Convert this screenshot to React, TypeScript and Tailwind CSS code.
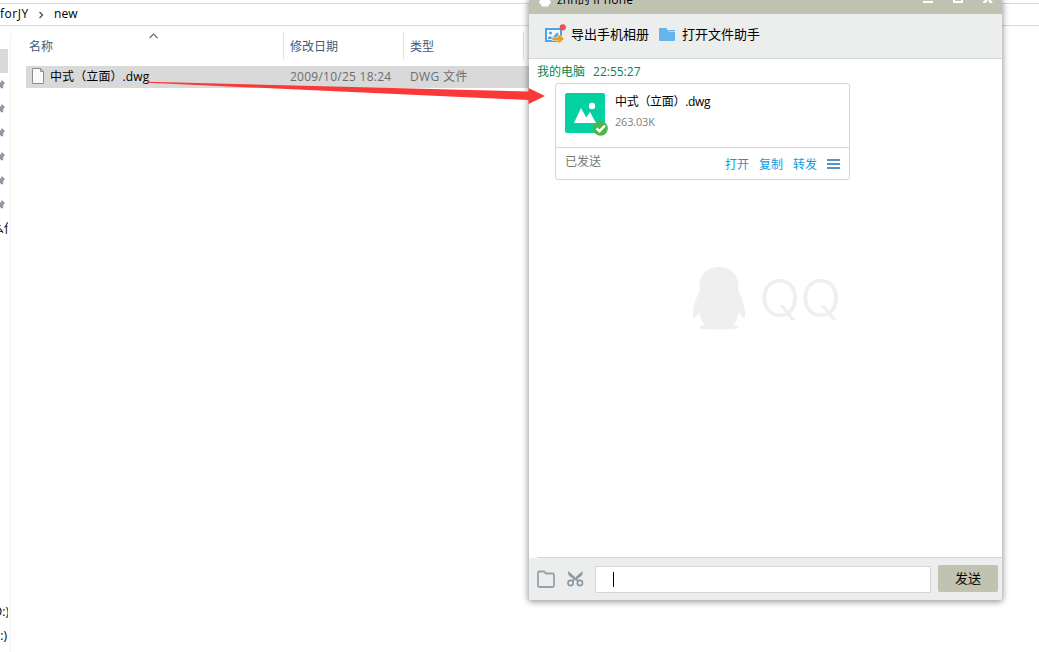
import React from 'react';

const pinRows = [0, 1, 2, 3, 4, 5];

function Pin() {
  return (
    <svg width="6" height="12" viewBox="0 0 6 12" className="block" fill="#8b98a3">
      <path d="M0 3.5 L1.2 3.2 L1.6 .8 L5.3 4.6 L3.4 5.2 L3.2 8.6 L2 9.8 L0 8Z" />
    </svg>
  );
}

function Sidebar() {
  return (
    <aside className="h-full w-[11px] shrink-0 overflow-hidden pt-[7px]">
      <div className="flex h-[619px] w-[11px] flex-col border-r border-[#f5f5f5] pt-4">
        <div className="h-6 w-2 shrink-0 bg-[#d9d9d9]" />
        {pinRows.map((row) => (
          <div key={row} className="flex h-6 shrink-0 items-center">
            <Pin />
          </div>
        ))}
        <div className="h-6 w-2 shrink-0 overflow-hidden whitespace-nowrap leading-[24px]">
          <span className="-ml-[8px] block">么传</span>
        </div>
        <div className="h-[359px] shrink-0" />
        <div className="flex h-6 w-2 shrink-0 justify-end overflow-hidden whitespace-nowrap leading-6">
          <span className="-mr-[1px]">(D:)</span>
        </div>
        <div className="flex h-6 w-[7px] shrink-0 justify-end overflow-hidden whitespace-nowrap leading-6">(E:)</div>
      </div>
    </aside>
  );
}

function Explorer() {
  return (
    <div className="flex h-full w-full flex-col">
      <div className="h-1 shrink-0 border-b border-[#d9d9d9]" />
      <div className="flex h-[22px] shrink-0 items-center border-b border-[#d9d9d9] leading-[20px]">
        <span className="-mt-[1px] w-[37px] tracking-[.5px]">forJY</span>
        <svg width="8" height="8" viewBox="0 0 8 8" className="mr-[9px]" fill="none" stroke="#555" strokeWidth="1.4">
          <path d="M2.5 1 L5.5 4 L2.5 7" />
        </svg>
        <span className="-mt-[2px] tracking-[.1px]">new</span>
      </div>
      <div className="flex min-h-0 grow">
        <Sidebar />
        <main className="flex w-[1013px] flex-col pl-[15px] pt-[6px]">
          <div className="flex h-[28px] text-[#44597a]">
            <div className="flex w-[258px] border-r border-[#e2e2e2] pl-[3px] leading-[29px]">
              <span className="w-[120px]">名称</span>
              <svg width="9" height="6" viewBox="0 0 9 6" className="mt-[1px]" fill="none" stroke="#666" strokeWidth="1.1">
                <path d="M.5 5 L4.5 1 L8.5 5" />
              </svg>
            </div>
            <div className="w-[120px] border-r border-[#e2e2e2] pl-[6px] leading-[29px]">修改日期</div>
            <div className="w-[120px] border-r border-[#e2e2e2] pl-[6px] leading-[29px]">类型</div>
          </div>
          <div className="mt-[6px] flex h-[22px] w-[503px] items-center bg-[#d9d9d9] pl-[6px] leading-[22px] text-[#6d6d6d]">
            <svg width="12" height="16" viewBox="0 0 12 16" className="mr-[6px] -mt-[2px]">
              <path d="M.5 .5 H8.5 L11.5 3.5 V15.5 H.5Z" fill="#fafafa" stroke="#8c8c8c" />
              <path d="M8.5 .5 V3.5 H11.5" fill="none" stroke="#8c8c8c" />
            </svg>
            <span className="w-[240px] text-black tracking-[.1px]">中式（立面）.dwg</span>
            <span className="w-[120px] tracking-[.25px]">2009/10/25 18:24</span>
            <span className="tracking-[.35px]">DWG 文件</span>
          </div>
        </main>
      </div>
    </div>
  );
}

function PhotoExportIcon() {
  return (
    <svg width="22" height="22" viewBox="0 0 22 22" className="-mt-[2px]">
      <rect x="2" y="5" width="15" height="12" fill="#f4f9fc" stroke="#4aa5e8" strokeWidth="2" />
      <circle cx="6.5" cy="9" r="1.5" fill="#4aa5e8" />
      <path d="M4 15 V13.5 L6 12 L8.5 13.5 L13 8.5 L15 10 V15Z" fill="#4aa5e8" />
      <path d="M8 13.2 H14 V10 L20.5 14.8 L14 19.7 V16.5 H8Z" fill="#f39c12" stroke="#eceeed" strokeWidth=".6" />
      <circle cx="18.8" cy="3.3" r="3.1" fill="#e85454" />
    </svg>
  );
}

function FileCard() {
  return (
    <section className="ml-[26px] mt-[2px] flex h-[97px] w-[295px] flex-col rounded-[3px] border border-[#ccd7e0] bg-white">
      <div className="flex h-[64px] shrink-0 border-b border-[#ccd7e0] pl-[9px] pt-[9px]">
        <svg width="44" height="44" viewBox="0 0 44 44" className="mr-[6px]">
          <rect width="40" height="40" rx="2" fill="#03d1a2" />
          <circle cx="27" cy="13" r="3.2" fill="#fff" />
          <path d="M9 30 L16 15 L21.3 24.5 L25 19 L31 30Z" fill="#fff" />
          <circle cx="35.5" cy="35.5" r="7.3" fill="#4fb54b" />
          <path d="M31.5 35.3 L34.5 38.2 L40 32.5" fill="none" stroke="#fff" strokeWidth="2.4" />
        </svg>
        <div className="flex flex-col">
          <span className="h-[20px] leading-[18px] tracking-[-.3px]">中式（立面）.dwg</span>
          <span className="text-[11px] leading-[18px] tracking-[-.2px] text-[#808080]">263.03K</span>
        </div>
      </div>
      <div className="flex pl-[9px] leading-[28px]">
        <span className="w-[160px] text-[#777]">已发送</span>
        <div className="flex gap-[10px] pt-[3px] text-[#0f9bd9]">
          <span>打开</span>
          <span>复制</span>
          <span>转发</span>
          <div className="mt-[8px] flex flex-col gap-[2px]">
            <div className="h-[2px] w-[13px] bg-[#5295c9]" />
            <div className="h-[2px] w-[13px] bg-[#5295c9]" />
            <div className="h-[2px] w-[13px] bg-[#5295c9]" />
          </div>
        </div>
      </div>
    </section>
  );
}

function Watermark() {
  return (
    <div className="mt-[86px] flex h-[64px] pl-[163px] text-[#efefef]">
      <svg width="54" height="64" viewBox="0 0 54 64" fill="currentColor">
        <path d="M27 1 C15 1 7.5 9 7.5 20 V26 C4 32 .5 39 1 51 C1 54 5 50 7.5 46 C8.5 52 10 56 13 59 C9 59 7.5 60.5 7.5 62 C9 64 45 64 46.5 62 C46.5 60.5 45 59 41 59 C44 56 45.5 52 46.5 46 C49 50 53 54 53 51 C53.5 39 50 32 46.5 26 V20 C46.5 9 39 1 27 1Z" />
      </svg>
      <span className="ml-[13px] block origin-left scale-x-[1.05] font-['Inter'] text-[52px] font-light leading-[66px] tracking-[-.4px]">QQ</span>
    </div>
  );
}

function ChatWindow() {
  return (
    <div className="absolute left-[529px] top-0 flex h-[600px] w-[473px] flex-col rounded-b-[3px] bg-white shadow-[0_1px_6px_1px_rgba(0,0,0,0.4)]">
      <header className="flex h-[14px] shrink-0 items-start overflow-hidden bg-[#c0c2b2]">
        <svg width="12" height="8" viewBox="0 0 12 8" className="ml-[10px]">
          <path d="M1 0 H11 L12 3 L10.5 4 L9 6.5 H3 L1.5 4 L0 3Z" fill="#fff" />
        </svg>
        <span className="-mt-[9px] ml-[6px] leading-[18px] tracking-[.15px]">znh的 iPhone</span>
        <svg width="70" height="4" viewBox="0 0 70 4" className="ml-auto mr-[9px]" fill="#fff">
          <path d="M0 1 H10 V3 H0Z M30 0 H32 V1 H38 V0 H40 V3 H30Z M60 3 V2 L62 0 H64.5 L63 3Z M69.500 3 V2 L67.500 0 H65 L66.500 3Z" />
        </svg>
      </header>
      <nav className="flex h-[45px] shrink-0 items-center border-b border-[#d5d8d8] bg-[#eceeed] pl-[15px] text-[13px] leading-[20px]">
        <PhotoExportIcon />
        <span className="ml-[5px] mr-[10px] -mt-[4px]">导出手机相册</span>
        <svg width="16" height="13" viewBox="0 0 16 13" className="-mt-[4px]">
          <path d="M0 1 Q0 0 1 0 H7 L9 2 H16 V12 Q16 13 15 13 H1 Q0 13 0 12Z" fill="#66b4ee" />
          <path d="M8.500 1.500 L10.500 3.500 H16" fill="none" stroke="#d5e8f5" strokeWidth=".7" />
        </svg>
        <span className="ml-[7px] -mt-[4px]">打开文件助手</span>
      </nav>
      <div className="flex h-[498px] shrink-0 flex-col pt-[3px]">
        <div className="flex h-[19px] gap-[8px] pl-[8px] leading-[19px] text-[#098348]">
          <span>我的电脑</span>
          <span>22:55:27</span>
        </div>
        <FileCard />
        <Watermark />
      </div>
      <div className="ml-[8px] h-px shrink-0 bg-[#d5d8d8]" />
      <footer className="flex h-[42px] shrink-0 items-start rounded-b-[3px] bg-[#eceeed] pl-[8px]">
        <svg width="18" height="18" viewBox="0 0 18 18" className="mt-[12px]" fill="none" stroke="#96a2ad" strokeWidth="1.8">
          <path d="M1 3 Q1 1.500 2.500 1.500 H7 L9 3.500 H15.500 Q17 3.500 17 5 V15.500 Q17 17 15.500 17 H2.500 Q1 17 1 15.500Z" />
        </svg>
        <svg width="17" height="17" viewBox="0 0 17 17" className="ml-[12px] mt-[12px]" fill="none" stroke="#8b98a3" strokeWidth="1.7">
          <circle cx="3.6" cy="13" r="2.6" />
          <circle cx="12.900" cy="13" r="2.6" />
          <path d="M5 11 L8.300 8.800 L11.500 11" />
          <path d="M1 1 L9.700 8.500 L8 10 L2.400 6 Q.8 4.500 1 1Z M15.600 1 L7 8.500 L8.800 10 L14.400 6 Q15.800 4.500 15.600 1Z" fill="#8b98a3" stroke="none" />
        </svg>
        <div className="ml-[11px] mt-[8px] h-[27px] w-[336px] rounded-[1px] border border-[#d3d6d6] bg-white pl-[17px] pt-[5px]">
          <div className="h-[15px] w-px bg-black" />
        </div>
        <button className="ml-[7px] mt-[7px] h-[27px] w-[60px] rounded-[2px] bg-[#c0c2b2] text-[13px] leading-[27px]">发送</button>
      </footer>
    </div>
  );
}

function SendArrow() {
  return (
    <svg className="pointer-events-none absolute left-[148px] top-[80px]" width="400" height="28" viewBox="0 0 400 28">
      <path d="M0 1.800 L380.500 11.500 V8 L397 16 L380.500 24 V20 L0 2.800Z" fill="#fb3838" />
    </svg>
  );
}

export default function App() {
  return (
    <div className="relative h-[652px] w-[1039px] overflow-hidden bg-white font-['Open_Sans','Noto_Sans_CJK_SC',sans-serif] text-[12px] text-black">
      <Explorer />
      <ChatWindow />
      <SendArrow />
    </div>
  );
}
